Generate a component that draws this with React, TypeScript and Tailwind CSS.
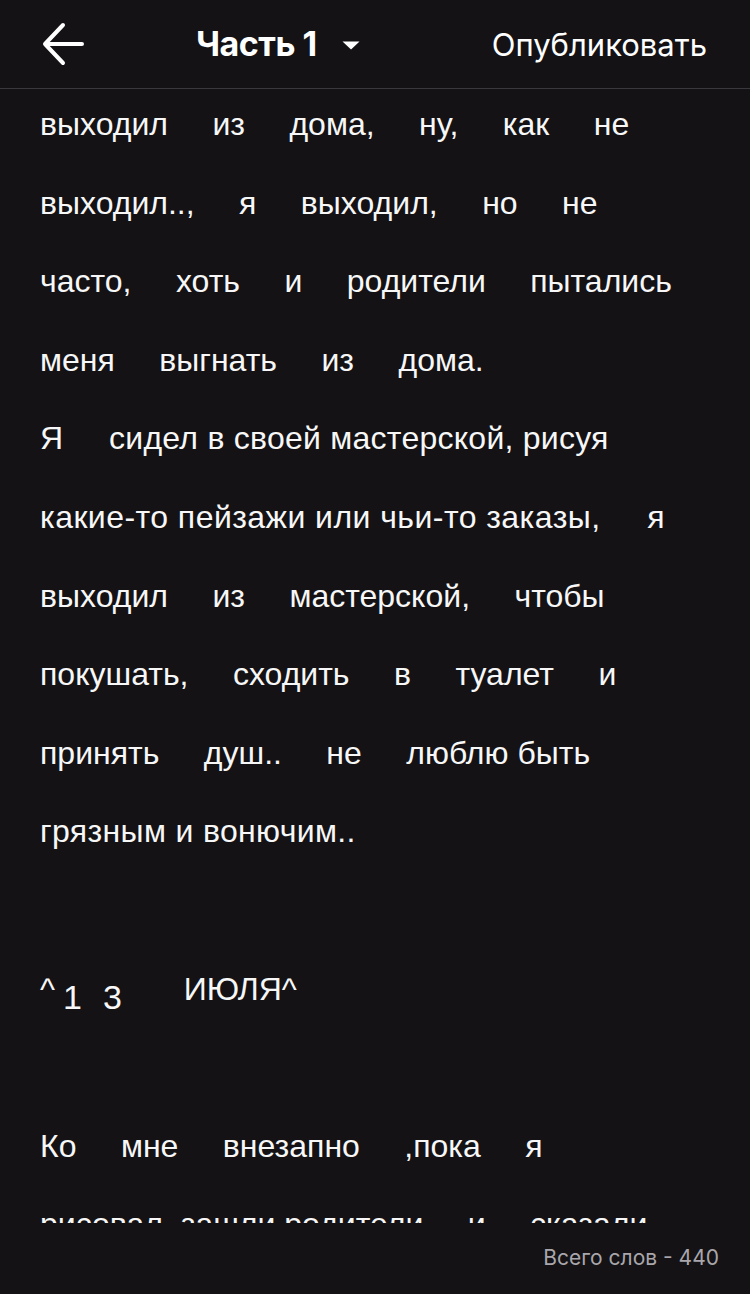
import React from "react";

type Line = { text: string; cls?: string };

const LINES: Line[] = [
  { text: "выходил     из     дома,     ну,     как     не" },
  { text: "выходил..,     я     выходил,     но     не" },
  { text: "часто,     хоть     и     родители     пытались" },
  { text: "меня     выгнать     из     дома." },
  { text: "Я     сидел в своей мастерской, рисуя", cls: "tracking-[0.25px]" },
  { text: "какие-то пейзажи или чьи-то заказы,     я", cls: "tracking-[0.45px]" },
  { text: "выходил     из     мастерской,     чтобы" },
  { text: "покушать,     сходить     в     туалет     и" },
  { text: "принять     душ..     не     люблю быть" },
  { text: "грязным и вонючим..", cls: "tracking-[0.35px]" },
];

const TAIL: string[] = ["Ко     мне     внезапно     ,пока     я", "рисовал, зашли родители     и     сказали"];

function BackArrow() {
  return (
    <svg width="44" height="44" viewBox="0 0 44 44" fill="none">
      <path
        d="M41 22H4M22 3L4 22L22 41"
        stroke="white"
        strokeWidth="4"
        strokeLinecap="round"
        strokeLinejoin="round"
      />
    </svg>
  );
}

function Caret() {
  return (
    <svg width="18" height="9" viewBox="0 0 18 9">
      <path d="M0.5 0.5H17.5L9 8.5Z" fill="white" />
    </svg>
  );
}

export default function App() {
  return (
    <div className="h-[1294px] w-[750px] flex flex-col bg-[#141215] text-white overflow-hidden">
      {/* Header */}
      <div className="h-[89px] shrink-0 flex items-center border-b border-[#3a383c] pl-[41px] pr-[43px] font-['Inter',sans-serif]">
        <BackArrow />
        <div className="ml-[111px] flex items-center -mt-[2px]">
          <span className="text-[34px] font-bold tracking-[-0.5px]">Часть 1</span>
          <span className="ml-[25px] mt-[4px]">
            <Caret />
          </span>
        </div>
        <span className="ml-auto text-[31px] leading-none">Опубликовать</span>
      </div>

      {/* Text */}
      <div className="h-[1134px] shrink-0 overflow-hidden">
        <div className="-mt-[4px] pl-[40px] font-['Liberation_Sans',Arial,sans-serif] text-[32px] leading-[78.6px] whitespace-pre text-[#f7f7f7]">
          {LINES.map((l, i) => (
            <div key={i} className={l.cls}>
              {l.text}
            </div>
          ))}
          <div>&nbsp;</div>
          <div className="h-[78.6px]">
            <span>^</span>
            <span className="ml-[8px] leading-none align-[-9px] text-[34px]">1</span>
            <span className="ml-[21px] leading-none align-[-9px] text-[34px]">3</span>
            <span className="ml-[62px]">ИЮЛЯ^</span>
          </div>
          <div>&nbsp;</div>
          {TAIL.map((l, i) => (
            <div key={i}>{l}</div>
          ))}
        </div>
      </div>

      {/* Footer */}
      <div className="flex-1 flex items-center justify-end pr-[31px] pb-[2px] font-['Inter',sans-serif] text-[21px] text-[#a9a7ab]">
        Всего слов - 440
      </div>
    </div>
  );
}
